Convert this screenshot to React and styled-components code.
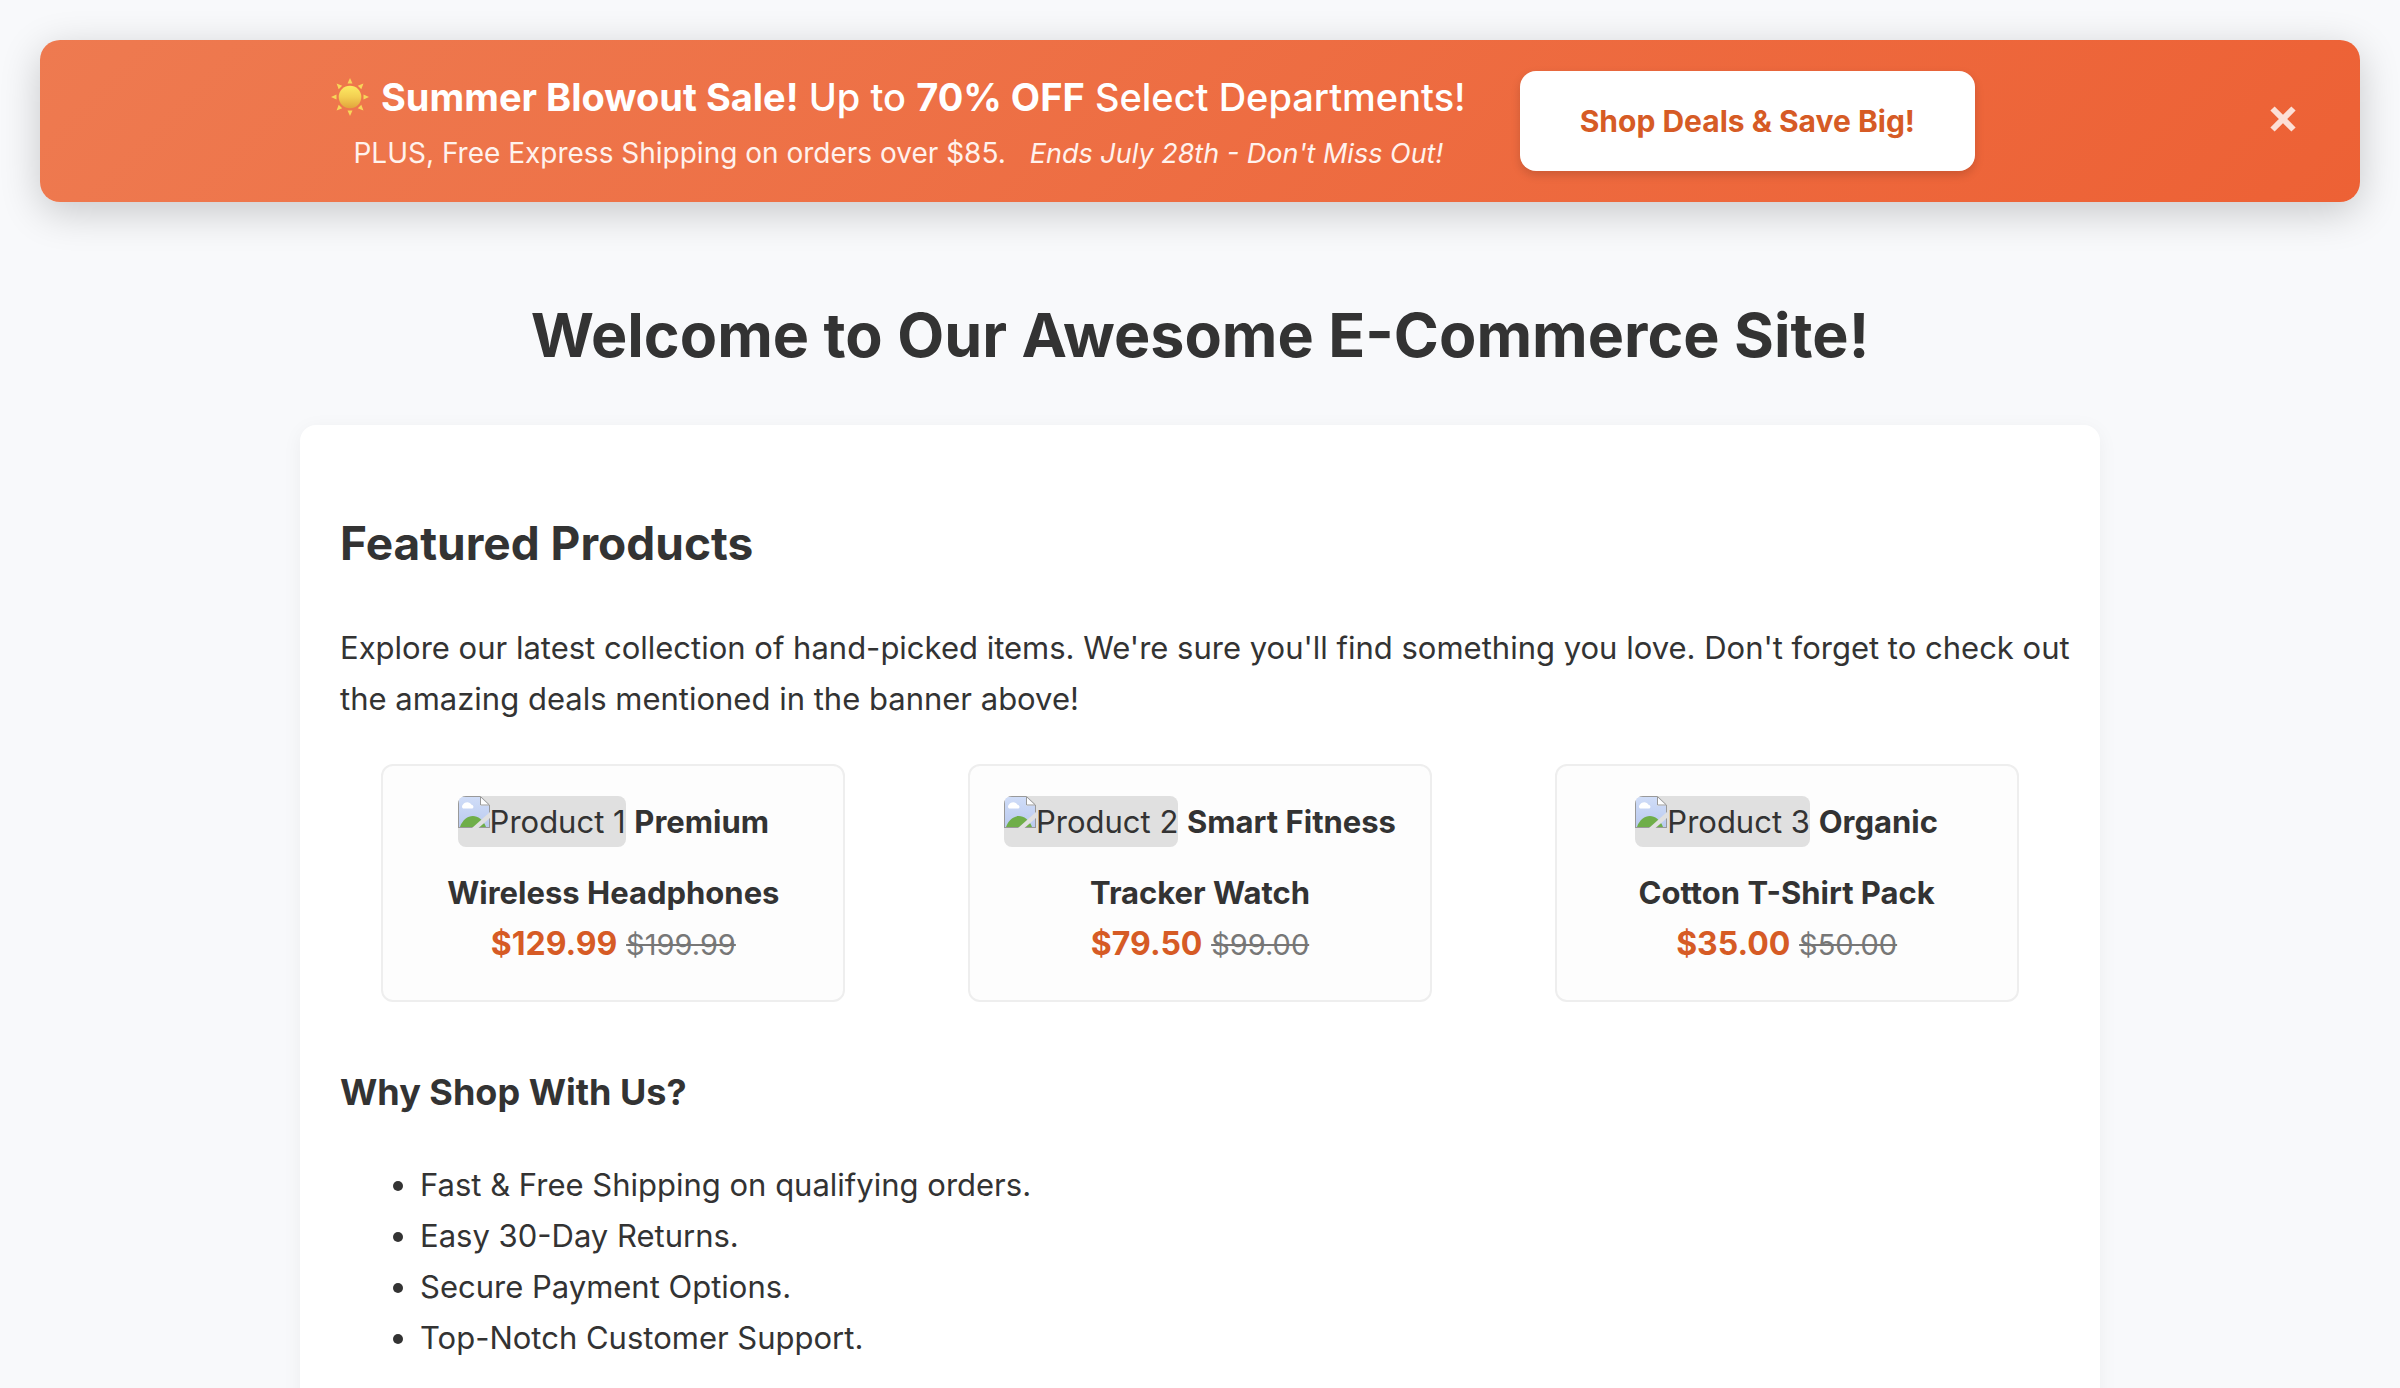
import React, { useState } from "react";
import styled, { createGlobalStyle } from "styled-components";

const GlobalStyle = createGlobalStyle`
  *, *::before, *::after { box-sizing: border-box; }
  body {
    margin: 0;
    background: #f8f9fb;
    color: #333;
    font-family: Inter, "Liberation Sans", sans-serif;
    font-size: 31px;
    line-height: 51px;
  }
`;

const Page = styled.div`
  padding: 40px 40px 0;
`;

const Banner = styled.section`
  display: flex;
  align-items: center;
  gap: 40px;
  padding: 27px 50px;
  border-radius: 20px;
  color: #fff;
  background: linear-gradient(135deg, #ee7a50, #ed6135);
  box-shadow: 0 10px 40px rgba(0, 0, 0, 0.2);
`;

const BannerContent = styled.div`
  flex: 1;
  display: flex;
  flex-wrap: wrap;
  align-items: center;
  justify-content: center;
  gap: 4px 54px;
`;

const BannerText = styled.div`
  display: flex;
  flex-direction: column;
  gap: 4px;
  text-align: center;
`;

const BannerTitle = styled.p`
  display: flex;
  align-items: center;
  justify-content: center;
  gap: 12px;
  margin: 0;
  font-size: 38px;
  font-weight: 500;
  line-height: 60px;

  strong { font-weight: 700; }
`;

const BannerNote = styled.p`
  margin: 0;
  font-size: 28px;
  line-height: 44px;
  color: #fff2ed;

  em {
    margin-left: 24px;
    font-size: 27px;
    line-height: 1;
  }
`;

const CtaLink = styled.a`
  padding: 24px 60px;
  border-radius: 16px;
  background: #fff;
  box-shadow: 0 4px 10px rgba(0, 0, 0, 0.15);
  color: #d65b25;
  font-size: 30px;
  font-weight: 700;
  line-height: 52px;
  text-decoration: none;
  white-space: nowrap;
`;

const CloseButton = styled.button`
  display: grid;
  place-items: center;
  width: 54px;
  height: 54px;
  padding: 0 0 4px;
  border: 0;
  background: none;
  color: rgba(255, 255, 255, 0.8);
  cursor: pointer;
`;

const PageTitle = styled.h1`
  margin: 82px 0 39px;
  font-size: 61px;
  font-weight: 700;
  line-height: 102px;
  text-align: center;
`;

const Card = styled.main`
  max-width: 1800px;
  margin: 0 auto;
  padding: 80px 40px 60px;
  border-radius: 16px;
  background: #fff;
  box-shadow: 0 4px 20px rgba(0, 0, 0, 0.05);
`;

const SectionTitle = styled.h2`
  margin: 0 0 41px;
  font-size: 46px;
  font-weight: 700;
  line-height: 76px;
`;

const SubTitle = styled.h3`
  margin: 61px 0 38px;
  font-size: 36px;
  font-weight: 700;
  line-height: 58px;
`;

const Intro = styled.p`
  margin: 0 -20px 0 0;
`;

const Products = styled.div`
  display: flex;
  flex-wrap: wrap;
  justify-content: space-around;
  gap: 40px;
  margin-top: 40px;
`;

const Product = styled.article`
  width: 464px;
  padding: 30px;
  border: 2px solid #eee;
  border-radius: 12px;
  background: #fdfdfd;
  text-align: center;
`;

const ProductName = styled.strong`
  font-weight: 700;
`;

const Picture = styled.span`
  display: inline-block;
  margin-bottom: 20px;
  border-radius: 8px;
  background: #e0e0e0;

  svg {
    vertical-align: top;
    border-top-left-radius: 8px;
  }
`;

const Price = styled.span`
  color: #d65b25;
  font-size: 32px;
  font-weight: 700;
`;

const OldPrice = styled.s`
  color: #777;
  font-size: 29px;
`;

const Perks = styled.ul`
  margin: 0;
  padding-left: 80px;
`;

const Sun = () => (
  <svg width="38" height="38" viewBox="0 0 38 38" aria-hidden="true">
    <defs>
      <linearGradient id="sun" x1="0" y1="0" x2="0" y2="1">
        <stop offset="0" stopColor="#fdea62" />
        <stop offset="0.5" stopColor="#f3cf52" />
        <stop offset="1" stopColor="#e2a43c" />
      </linearGradient>
    </defs>
    {[0, 45, 90, 135, 180, 225, 270, 315].map((a) => (
      <path key={a} d="M19 0 L21.5 5.5 H16.5 Z" fill="#f7d65a" transform={`rotate(${a} 19 19)`} />
    ))}
    <circle cx="19" cy="19" r="11.3" fill="url(#sun)" />
  </svg>
);

const BrokenImage = () => (
  <svg width="32" height="32" viewBox="0 0 32 32" aria-hidden="true">
    <defs>
      <linearGradient id="sky" x1="0" y1="0" x2="0" y2="1">
        <stop offset="0" stopColor="#d0ddf8" />
        <stop offset="1" stopColor="#b9c9ee" />
      </linearGradient>
    </defs>
    <path d="M1 1 H22 L31 10 V32 H1 Z" fill="url(#sky)" />
    <path d="M5 12.5 a2.5 2.5 0 0 1 0 -4 a5 5 0 0 1 8.5 0.3 a2 2 0 0 1 1 3.7 Z" fill="#fff" />
    <path d="M2 31 C7 17 22 16 28 31 Z" fill="#6fae49" />
    <path d="M22 1 V9.5 H31 Z" fill="#fff" />
    <path d="M0.5 32 V0.5 H22.5 L31.5 9 V32 M22.5 1 V9 H31 M0 31.5 H32" fill="none" stroke="#999" />
    <path d="M14 32 L32 16 V22 L20.5 32 Z" fill="#e0e0e0" />
  </svg>
);

const products = [
  { alt: "Product 1", line: "Premium", name: "Wireless Headphones", price: "$129.99", old: "$199.99" },
  { alt: "Product 2", line: "Smart Fitness", name: "Tracker Watch", price: "$79.50", old: "$99.00" },
  { alt: "Product 3", line: "Organic", name: "Cotton T-Shirt Pack", price: "$35.00", old: "$50.00" },
];

const perks = [
  "Fast & Free Shipping on qualifying orders.",
  "Easy 30-Day Returns.",
  "Secure Payment Options.",
  "Top-Notch Customer Support.",
];

export default function App() {
  const [open, setOpen] = useState(true);
  return (
    <Page>
      <GlobalStyle />
      {open && (
        <Banner>
          <BannerContent>
            <BannerText>
              <BannerTitle>
                <Sun />
                <span>
                  <strong>Summer Blowout Sale!</strong> Up to <strong>70% OFF</strong> Select Departments!
                </span>
              </BannerTitle>
              <BannerNote>
                PLUS, Free Express Shipping on orders over $85.
                <em>Ends July 28th - Don't Miss Out!</em>
              </BannerNote>
            </BannerText>
            <CtaLink href="#deals">Shop Deals &amp; Save Big!</CtaLink>
          </BannerContent>
          <CloseButton type="button" aria-label="Close" onClick={() => setOpen(false)}>
            <svg width="28" height="28" viewBox="0 0 28 28" aria-hidden="true">
              <path d="M3.5 3.5 L24.5 24.5 M24.5 3.5 L3.5 24.5" stroke="currentColor" strokeWidth="6" fill="none" />
            </svg>
          </CloseButton>
        </Banner>
      )}
      <PageTitle>Welcome to Our Awesome E-Commerce Site!</PageTitle>
      <Card>
        <SectionTitle>Featured Products</SectionTitle>
        <Intro>
          Explore our latest collection of hand-picked items. We're sure you'll find something you love. Don't
          forget to check out the amazing deals mentioned in the banner above!
        </Intro>
        <Products id="deals">
          {products.map((p) => (
            <Product key={p.alt}>
              <Picture>
                <BrokenImage />
                {p.alt}
              </Picture>{" "}
              <ProductName>{p.line}</ProductName>
              <br />
              <ProductName>{p.name}</ProductName>
              <br />
              <Price>{p.price}</Price> <OldPrice>{p.old}</OldPrice>
            </Product>
          ))}
        </Products>
        <SubTitle>Why Shop With Us?</SubTitle>
        <Perks>
          {perks.map((t) => (
            <li key={t}>{t}</li>
          ))}
        </Perks>
      </Card>
    </Page>
  );
}
